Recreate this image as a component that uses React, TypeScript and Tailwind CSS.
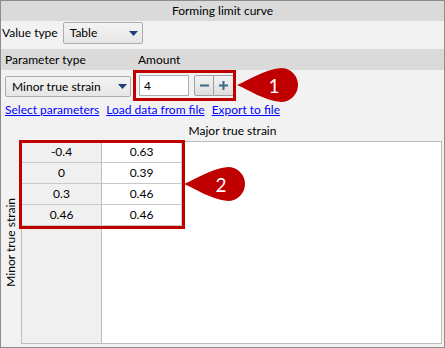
import React from "react";

function Arrow() {
  return (
    <svg width="9" height="5" viewBox="0 0 9 5">
      <polygon points="0,0 9,0 4.5,5" fill="#1f3f7c" />
    </svg>
  );
}

function Callout({ n, left, top }: { n: string; left: number; top: number }) {
  return (
    <div className="absolute w-[62px] h-[36px]" style={{ left, top }}>
      <svg width="62" height="36" viewBox="0 0 62 36" className="absolute inset-0">
        <path
          d="M0 18 C 12 13, 26 3, 44 1 A17 17 0 0 1 44 35 C 26 33, 12 23, 0 18 Z"
          fill="#c00000"
        />
      </svg>
      <div className="absolute left-[29px] top-0 w-[16px] h-[36px] flex items-center justify-center text-white text-[19px] leading-none">
        {n}
      </div>
    </div>
  );
}

const rows = [
  ["-0.4", "0.63"],
  ["0", "0.39"],
  ["0.3", "0.46"],
  ["0.46", "0.46"],
];

export default function App() {
  return (
    <div className="relative w-[445px] h-[348px] overflow-hidden border border-[#8c8c8c] bg-[#f2f2f2] text-[12px] text-black font-['Lato',sans-serif] flex flex-col">
      {/* title */}
      <div className="h-[20px] bg-[#dadada] flex items-center justify-center leading-none">
        Forming limit curve
      </div>
      {/* value type */}
      <div className="h-[28px] flex items-start pt-[1px] pl-[1px] gap-[5px]">
        <span className="mt-[5px] leading-none">Value type</span>
        <div className="w-[80px] h-[22px] border border-[#acacac] rounded-[2px] bg-linear-to-b from-[#f3f3f3] to-[#e6e6e6] flex items-center justify-between pl-[6px] pr-[4px]">
          <span className="leading-none">Table</span>
          <Arrow />
        </div>
      </div>
      {/* header band */}
      <div className="h-[21px] bg-[#dadada] flex items-center leading-none">
        <span className="pl-[4px] w-[137px]">Parameter type</span>
        <span>Amount</span>
      </div>
      {/* controls row */}
      <div className="h-[30px] flex items-start pl-[4px]">
        <div className="mt-[6px] w-[126px] h-[21px] border border-[#acacac] rounded-[2px] bg-linear-to-b from-[#f3f3f3] to-[#e6e6e6] flex items-center justify-between pl-[6px] pr-[3px]">
          <span className="leading-none">Minor true strain</span>
          <Arrow />
        </div>
        <div className="ml-[8px] mt-[5px] w-[50px] h-[21px] bg-white border border-[#abadb3] flex items-center pl-[4px] leading-none">
          4
        </div>
        <div className="ml-[5px] mt-[5px] h-[21px] flex border border-[#a0a0a0] rounded-[2px] bg-linear-to-b from-[#f3f3f3] to-[#dedede]">
          <div className="w-[19px] h-full flex items-center justify-center border-r border-[#a0a0a0]">
            <svg width="9" height="9" viewBox="0 0 9 9">
              <rect x="0" y="3.5" width="9" height="2" fill="#3a6a88" />
            </svg>
          </div>
          <div className="w-[19px] h-full flex items-center justify-center">
            <svg width="9" height="9" viewBox="0 0 9 9">
              <rect x="0" y="3.5" width="9" height="2" fill="#3a6a88" />
              <rect x="3.5" y="0" width="2" height="9" fill="#3a6a88" />
            </svg>
          </div>
        </div>
      </div>
      {/* links */}
      <div className="h-[20px] flex items-center gap-[7px] pl-[4px] text-[#0000ff] leading-none">
        <span className="underline">Select parameters</span>
        <span className="underline">Load data from file</span>
        <span className="underline">Export to file</span>
      </div>
      {/* major label */}
      <div className="h-[21px] flex items-center justify-center pl-[20px] leading-none">
        Major true strain
      </div>
      {/* table area */}
      <div className="flex-1 flex pr-[2px] pb-[3px]">
        <div className="w-[20px] flex items-center justify-center">
          <span className="[writing-mode:vertical-rl] rotate-180 leading-none whitespace-nowrap">
            Minor true strain
          </span>
        </div>
        <div className="flex-1 flex border border-[#bdbdbd] bg-white">
          <div className="w-[80px] bg-[#f0f0f0] border-r border-[#bdbdbd] flex flex-col">
            {rows.map((r, i) => (
              <div
                key={i}
                className="h-[21px] border-b border-[#c8c8c8] flex items-center justify-center leading-none"
              >
                {r[0]}
              </div>
            ))}
          </div>
          <div className="w-[80px] flex flex-col">
            {rows.map((r, i) => (
              <div
                key={i}
                className="h-[21px] border-b border-r border-[#c8c8c8] flex items-center justify-center leading-none"
              >
                {r[1]}
              </div>
            ))}
          </div>
        </div>
      </div>

      {/* annotations */}
      <div className="absolute left-[132px] top-[69px] w-[103px] h-[31px] border-[3px] border-[#c00000]" />
      <div className="absolute left-[18px] top-[139px] w-[166px] h-[89px] border-[3px] border-[#c00000]" />
      <Callout n="1" left={236} top={66} />
      <Callout n="2" left={183} top={165} />
    </div>
  );
}
